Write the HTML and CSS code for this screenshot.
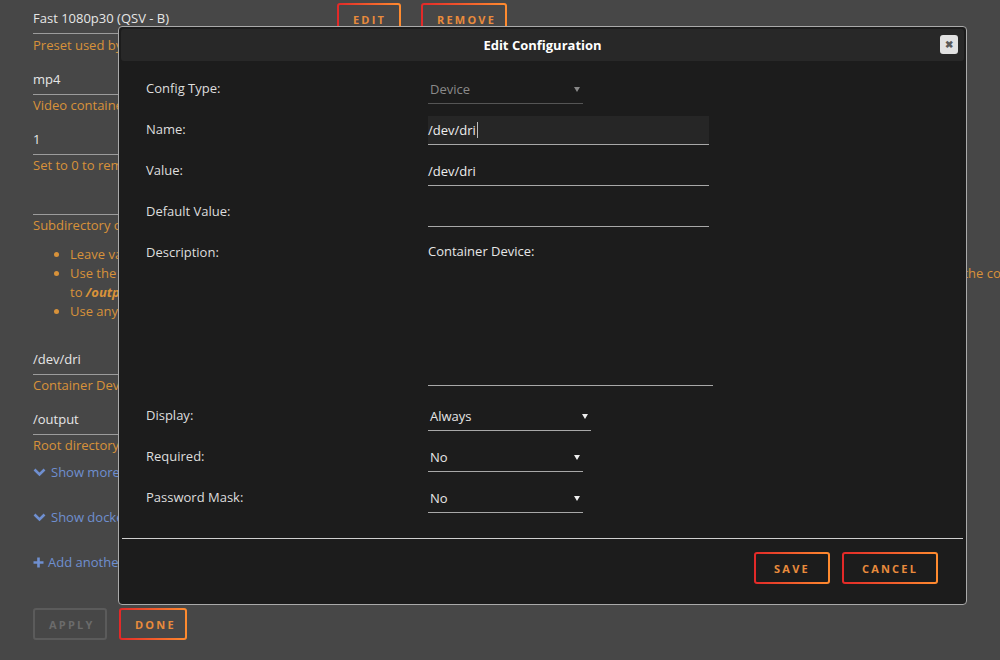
FILE: index.html
```html
<!DOCTYPE html>
<html lang="en">
<head>
<meta charset="UTF-8">
<meta name="viewport" content="width=device-width, initial-scale=1.0">
<title>Edit Configuration</title>
<link rel="stylesheet" href="styles.css">
</head>
<body>

<div class="page">
  <!-- Template fields behind the dialog -->
  <div class="field-row">
    <div class="field">Fast 1080p30 (QSV - B)</div>
    <button class="btn btn-edit">EDIT</button>
    <button class="btn btn-remove">REMOVE</button>
  </div>
  <div class="hint">Preset used by HandBrake when transcoding the video files</div>

  <div class="field">mp4</div>
  <div class="hint">Video container of the transcoded output file</div>

  <div class="field">1</div>
  <div class="hint">Set to 0 to remove the original file after a successful transcode</div>

  <div class="field"></div>
  <div class="hint">Subdirectory of the output root in which transcoded files are written</div>
  <ul class="notes">
    <li>Leave value empty to write files directly into the output root</li>
    <li>Use the name of a folder, e.g. movies, to create a subdirectory inside the output root which is mapped into the container, relative to the containers (the container path mapped<br>to <b><i>/output</i></b> in the container settings)</li>
    <li>Use any other absolute path only when it is also mapped as a volume</li>
  </ul>

  <div class="field">/dev/dri</div>
  <div class="hint">Container Device: Intel Quick Sync video device</div>

  <div class="field">/output</div>
  <div class="hint">Root directory for the transcoded output files</div>

  <div class="links">
    <div class="link">
      <svg width="13" height="9" viewBox="0 0 13 9"><polyline points="1.5,1.5 6.5,6.5 11.5,1.5" fill="none" stroke="#6f8fd0" stroke-width="2.6"/></svg>
      <span>Show more settings ...</span>
    </div>
    <div class="link">
      <svg width="13" height="9" viewBox="0 0 13 9"><polyline points="1.5,1.5 6.5,6.5 11.5,1.5" fill="none" stroke="#6f8fd0" stroke-width="2.6"/></svg>
      <span>Show docker allocations ...</span>
    </div>
    <div class="link add">
      <svg width="11" height="11" viewBox="0 0 11 11"><path d="M5.5 0.5v10M0.5 5.5h10" stroke="#6f8fd0" stroke-width="2.6"/></svg>
      <span>Add another Path, Port, Variable, Label or Device</span>
    </div>
  </div>

  <div class="actions">
    <button class="btn btn-off">APPLY</button>
    <button class="btn">DONE</button>
  </div>
</div>

<!-- Dialog -->
<div class="modal">
  <div class="modal-head">
    Edit Configuration
    <span class="close">&#10006;</span>
  </div>

  <div class="modal-body">
    <div class="label">Config Type:</div>
    <div class="select short off">Device <span class="caret"></span></div>

    <div class="label">Name:</div>
    <div class="input focus">/dev/dri<span class="cursor"></span></div>

    <div class="label">Value:</div>
    <div class="input">/dev/dri</div>

    <div class="label">Default Value:</div>
    <div class="input"></div>

    <div class="label">Description:</div>
    <div class="textarea">Container Device:</div>

    <div class="label">Display:</div>
    <div class="select wide">Always <span class="caret"></span></div>

    <div class="label">Required:</div>
    <div class="select short">No <span class="caret"></span></div>

    <div class="label">Password Mask:</div>
    <div class="select short">No <span class="caret"></span></div>
  </div>

  <div class="modal-foot">
    <button class="btn btn-dark">SAVE</button>
    <button class="btn btn-dark">CANCEL</button>
  </div>
</div>

</body>
</html>
```

FILE: styles.css
```css
body { margin: 0; background: #474747; color: #e6e6e6; font-family: "Open Sans", sans-serif; font-size: 13px; overflow: hidden; }
.page { width: 1120px; padding: 4px 0 0 33px; }

.field-row { display: flex; align-items: flex-start; }
.field { width: 290px; height: 29px; line-height: 29px; border-bottom: 1px solid #9c9c9c; }
.hint { line-height: 20px; color: #d8923a; margin-bottom: 10px; white-space: nowrap; }
.notes { margin: 6px 0 24px; padding-left: 37px; color: #d8923a; line-height: 19px; }
.notes li:nth-child(2) { white-space: nowrap; }
.notes b { font-weight: bold; }

.links { margin-top: -3px; }
.link { display: flex; align-items: center; gap: 5px; height: 20px; color: #6f8fd0; }
.link + .link { margin-top: 25px; }
.link.add { gap: 4px; }

.actions { display: flex; gap: 12px; margin-top: 36px; }

.btn { height: 32px; padding: 0 14px; border: 2px solid transparent; border-radius: 3px; font-family: inherit; font-size: 11px; font-weight: bold; letter-spacing: 2.2px; color: #e98b3c;
  background: linear-gradient(#474747, #474747) padding-box, linear-gradient(90deg, #e22828, #ff8c2f) border-box; }
.btn-edit { margin-left: 14px; margin-top: -1px; width: 64px; }
.btn-remove { margin-left: 20px; margin-top: -1px; width: 86px; }
.btn-off { width: 74px; color: #6b6b6b; background: #474747; border-color: #5b5b5b; }
.actions .btn:last-child { width: 68px; }
.btn-dark { background: linear-gradient(#1c1c1c, #1c1c1c) padding-box, linear-gradient(90deg, #e22828, #ff8c2f) border-box; }

/* dialog */
.modal { position: fixed; left: 118px; top: 26px; width: 849px; height: 579px; box-sizing: border-box; border: 1px solid #aaa; border-radius: 4px; background: #1c1c1c; }
.modal-head { position: relative; margin: 2px; height: 32px; border-radius: 3px; background: #282828; display: flex; align-items: center; justify-content: center; font-weight: bold; color: #fff; }
.close { position: absolute; right: 6px; top: 6px; width: 18px; height: 19px; border-radius: 3px; background: #e2e2e2; color: #5a5a5a; font-size: 10px; line-height: 19px; text-align: center; }

.modal-body { display: grid; grid-template-columns: 282px auto; row-gap: 12px; padding: 12px 0 0 27px; }
.label { line-height: 27px; color: #dedede; }
.input { width: 281px; height: 28px; line-height: 28px; border-bottom: 1px solid #a8a8a8; color: #eee; display: flex; align-items: flex-start; }
.input.focus { background: #262626; }
.cursor { display: inline-block; width: 1px; height: 16px; margin: 6px 0 0 1px; background: #bbb; }
.textarea { width: 285px; height: 143px; padding-top: 3px; line-height: 18px; border-bottom: 1px solid #a8a8a8; margin-bottom: 4px; }
.select { height: 28px; line-height: 28px; border-bottom: 1px solid #a8a8a8; padding-left: 2px; padding-right: 3px; display: flex; justify-content: space-between; align-items: center; box-sizing: content-box; }
.select.short { width: 150px; }
.select.wide { width: 158px; }
.select.off { color: #8a8a8a; border-color: #555; }
.caret { width: 0; height: 0; border-left: 3px solid transparent; border-right: 3px solid transparent; border-top: 5px solid #eee; }
.select.off .caret { border-top-color: #888; }

.modal-foot { margin: 25px 3px 0; border-top: 1px solid #cfcfcf; padding: 13px 25px 0 0; display: flex; justify-content: flex-end; gap: 12px; }
.modal-foot .btn:first-child { width: 76px; }
.modal-foot .btn:last-child { width: 96px; }
```
